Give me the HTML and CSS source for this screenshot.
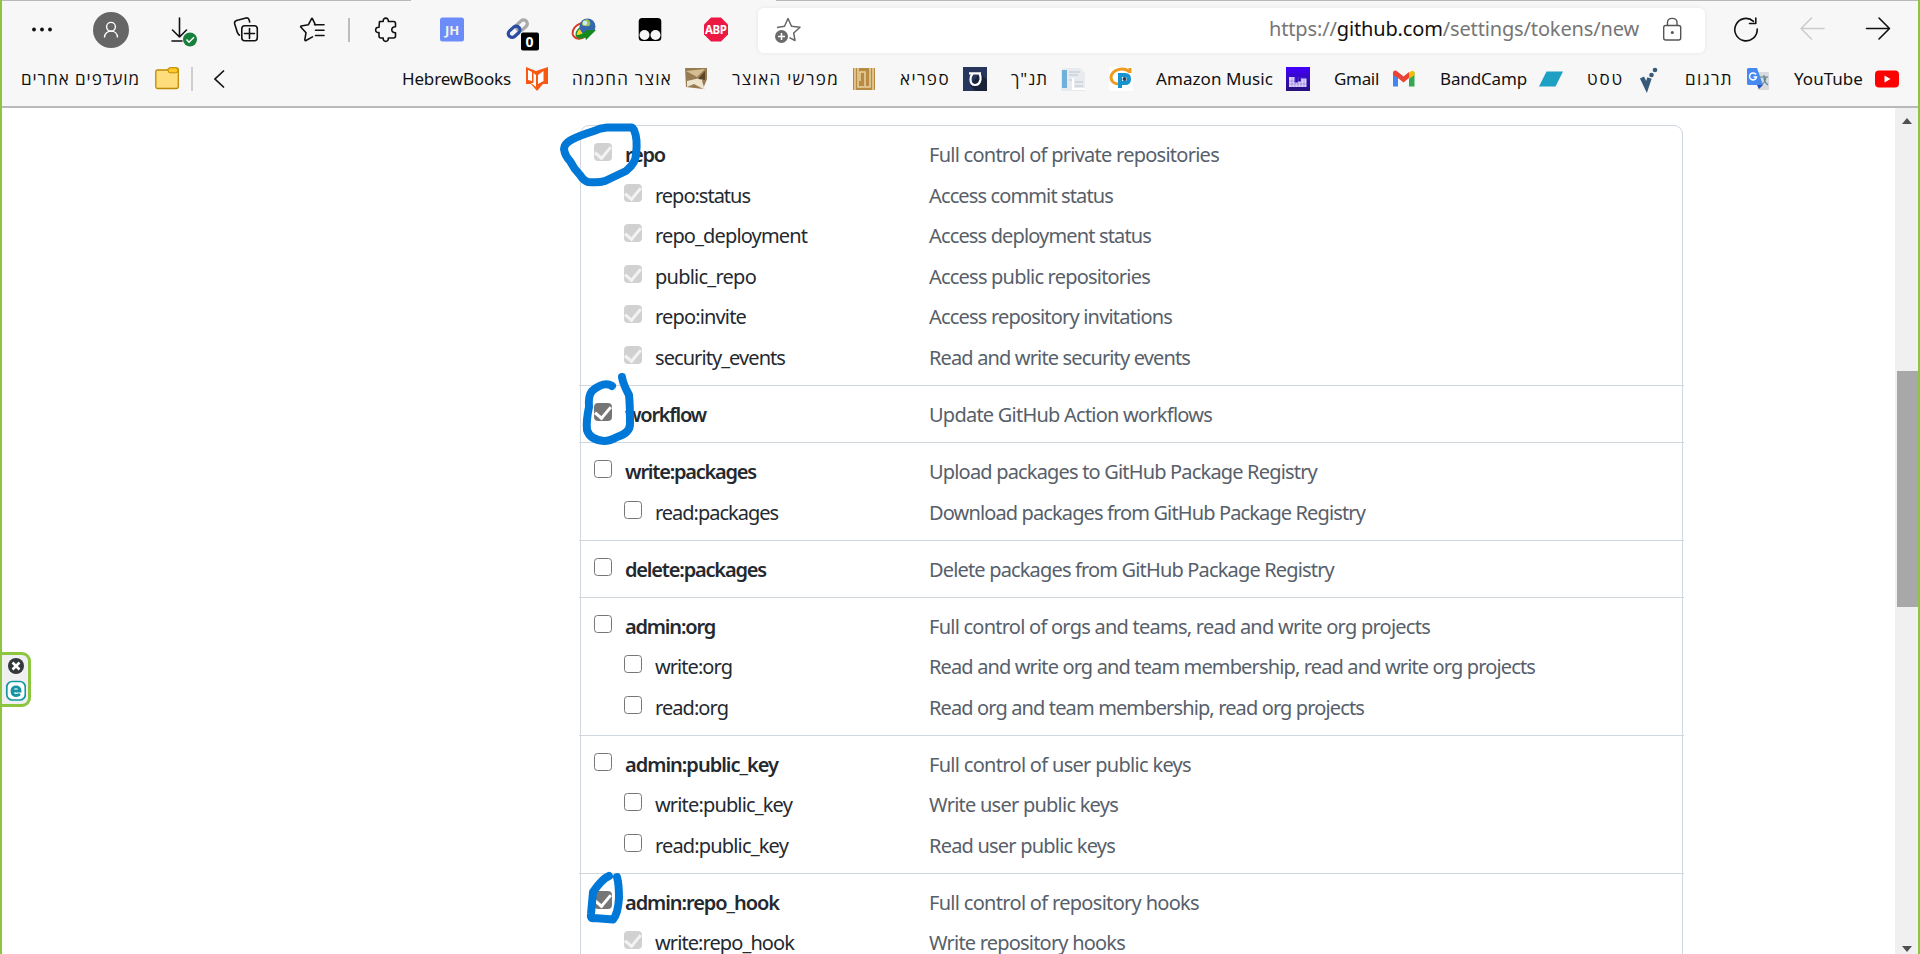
FILE: index.html
```html
<!DOCTYPE html>
<html lang="en">
<head>
<meta charset="utf-8">
<title>New personal access token</title>
<link rel="stylesheet" href="styles.css">
</head>
<body>
<div class="window">
<header class="chrome">
  <div class="tab-gap"></div>
  <div class="toolbar">
    <svg class="ico" viewBox="-18 -18 36 36"><g fill="#111"><circle cx="-8" cy="-.5" r="1.9"/><circle cx="0" cy="-.5" r="1.9"/><circle cx="8" cy="-.5" r="1.9"/></g></svg>
    <svg class="ico" viewBox="-18 -18 36 36"><circle r="18" fill="#666"/><g fill="none" stroke="#fff" stroke-width="1.4"><circle cy="-3.2" r="4.4"/><path d="M-6.5 7.5C-6.5-1 6.5-1 6.5 7.5"/></g></svg>
    <svg class="ico" viewBox="-18 -18 36 36"><path class="ln" d="M-.5-12V7M-7.5 0L-.5 7L6.5 0M-8 11H2"/><circle cx="10" cy="9.5" r="7" fill="#17803d"/><path d="M6.500 9.500l2.500 2.700l5-5" fill="none" stroke="#fff" stroke-width="1.6"/></svg>
    <svg class="ico" viewBox="-18 -18 36 36"><rect class="ln" x="-4.200" y="-4.200" width="15.500" height="15" rx="3"/><path class="ln" d="M3.500-1.500V8.500M-1.500 3.500H8.500M-6.500 5.200C-8.500 4-9 2-9.700-1L-11.300-6Q-12-8.700-9.500-9.500L0-12Q2.500-12.500 3.200-10L3.700-8"/></svg>
    <svg class="ico" viewBox="-18 -18 36 36"><path class="ln" d="M3.500-5L.5-11.200Q0-12-.5-11.200L-3.700-5.200L-10.800-4Q-11.800-3.500-11-2.800L-6 2.700L-7.200 9.800Q-7.100 10.900-6 10.500L.5 6.900M2.500-5.200H12M3.500.2H12M3.500 5.500H12"/></svg>
    <svg class="ico" viewBox="-18 -18 36 36"><path d="M0-12V12" stroke="#bdbdbd" stroke-width="2"/></svg>
    <svg class="ico" viewBox="-18 -18 36 36"><path class="ln" d="M-7.500-8.500H-3.800C-4.500-13 2-13 1.300-8.500H6.500Q8.500-8.500 8.500-6.500V-3.200C3.500-3.500 3.500 3 8.500 2.700V6Q8.500 8 6.500 8H1.300C2 12.500-4.500 12.500-3.800 8H-6Q-8 8-8 6V2.500C-12.500 3.500-12.500-3.500-8-2.700Z"/></svg>
    <svg class="ico" viewBox="-18 -18 36 36"><rect x="-12" y="-12.500" width="24" height="24" rx="2.500" fill="#6c8df9"/><text class="jh" x="0" y="4.500" text-anchor="middle">JH</text></svg>
    <svg class="ico wide" viewBox="-18 -18 40 40"><g fill="none" stroke-width="3.300"><rect x="-2" y="-11.500" width="7.500" height="12" rx="3.700" stroke="#aaa" transform="rotate(48 1 -5)"/><rect x="-9.500" y="-4" width="7.500" height="13" rx="3.700" stroke="#2b4da1" transform="rotate(48 -5 2)"/></g><rect x="1" y="2.500" width="18" height="18" rx="2" fill="#000"/><text class="count" x="9.500" y="17" text-anchor="middle">0</text></svg>
    <svg class="ico" viewBox="-18 -18 36 36"><ellipse cx="-3" cy="1" rx="9" ry="7" transform="rotate(-35 -3 1)" fill="#fff" stroke="#d63b24" stroke-width="2"/><ellipse cx="-2" cy="1" rx="7.500" ry="5" transform="rotate(-35)" fill="#f6d52a" stroke="#2e8f2f" stroke-width="1.500"/><circle cx="3.500" cy="-3.500" r="8" fill="#3566ae"/><path d="M-1-9Q4-13 6-8T1-4Q-4-4-1-9" fill="#9ac45a"/><circle cx="1" cy="-7" r="2.300" fill="#d5e8f5"/><path d="M-9 5Q-3 6 3 0H12L2 10L1 7Q-5 10-9 5" fill="#128a1e"/></svg>
    <svg class="ico" viewBox="-18 -18 36 36"><rect x="-11.300" y="-12" width="22.600" height="23" rx="3.500" fill="#000"/><circle cx="-5.500" cy="5" r="5" fill="#f7f7f7"/><circle cx="5.500" cy="5" r="5" fill="#f7f7f7"/></svg>
    <svg class="ico" viewBox="-18 -18 36 36"><path d="M-5-12.500H5L12-5.500V4.500L5 11.500H-5L-12 4.500V-5.500Z" fill="#ec1843"/><text class="abp" x="0" y="3.700" text-anchor="middle" textLength="22">ABP</text></svg>
    <div class="address">
      <svg class="ico star" viewBox="-18 -18 36 36"><path d="M-11-2.500L-3.500-3.800L0-11.500L3.500-3.800L12-2.700L5.700 3L7 10.500L1.500 7.700" fill="none" stroke="#666" stroke-width="1.500" stroke-linejoin="round"/><circle cx="-6.500" cy="6.500" r="6.500" fill="#6b6b6b"/><path d="M-6.500 3V10M-10 6.500H-3" stroke="#fff" stroke-width="1.500"/></svg>
      <span class="url" data-w="371">https://<b>github.com</b>/settings/tokens/new</span>
      <svg class="ico lock" viewBox="-18 -18 36 36"><g fill="none" stroke="#555" stroke-width="1.400"><rect x="-8.300" y="-4.500" width="17" height="14.500" rx="2"/><path d="M-4.500-4.500V-7.500C-4.500-13 5-13 5-7.500V-4.500"/></g><circle cx=".3" cy="2.500" r="1.500" fill="#555"/></svg>
    </div>
    <svg class="ico" viewBox="-18 -18 36 36"><path class="ln" d="M7.500-8.700A11.200 11.200 0 1 0 11.200-1M9.800-12V-6.500H3.500"/></svg>
    <svg class="ico" viewBox="-18 -18 36 36"><path class="ln pale" d="M12-1.500H-11M-.5-12L-11-1.500L-.5 9"/></svg>
    <svg class="ico" viewBox="-18 -18 36 36"><path class="ln" d="M-11.500-1.500H11.500M1-12L11.500-1.500L1 9"/></svg>
  </div>
  <div class="bookmarks">
    <span data-w="120">מועדפים אחרים</span>
    <svg class="fav" viewBox="0 0 24 24"><path d="M.8 4.500Q.8 3 2.500 3H12L15 1H21.500Q23.300 1 23.300 3V19.500Q23.300 21.500 21.300 21.500H2.800Q.8 21.500.8 19.500Z" fill="#ffdd7d" stroke="#be8a00" stroke-width="1.300"/><rect x="13" y=".8" width="10" height="5" rx="2.500" fill="#ffc928" stroke="#be8a00"/></svg>
    <i class="rule"></i>
    <svg class="fav" viewBox="0 0 24 24"><path d="M15 3.500L6 12L15 20.500" fill="none" stroke="#111" stroke-width="1.700"/></svg>
    <span data-w="110">HebrewBooks</span>
    <svg class="fav" viewBox="0 0 24 24"><path d="M1 0L11 4L23 0V17H18L12 24L6 17H1Z" fill="#f85912"/><path d="M3 3L7 5V14L3 13ZM8.500 6L11 8V20L6 16H8.500ZM13 8L18.500 4V14L13 17Z" fill="#fff"/></svg>
    <span data-w="101">אוצר החכמה</span>
    <svg class="fav" viewBox="0 0 24 24"><path d="M1 1H23V12L19 22L2 20Z" fill="#977b52"/><path d="M2 4L21 2L13 10Z" fill="#d5bd91"/><path d="M3 14L20 10L18 14L21 23L10 17L3 20Z" fill="#eee3cb"/><path d="M14 12L21 4V13Z" fill="#5d4528"/></svg>
    <span data-w="108">מפרשי האוצר</span>
    <svg class="fav" viewBox="0 0 24 24"><rect x="1" y="1" width="22" height="22" fill="#b88b45"/><path d="M3 1V23M21 1V23M6 1V20H12M18 1V20H13V5H8V14" fill="none" stroke="#ead39f" stroke-width="1.500"/></svg>
    <span data-w="51">ספריא</span>
    <svg class="fav" viewBox="0 0 24 24"><path d="M0 0H24V24H0Z" fill="#26365c"/><path d="M17 6L24 13V24H12L7 18Z" fill="#182238"/><path d="M6 6.300H18M16.500 7Q18 9 17.500 12.500Q16.500 18 12 18Q7.500 18 7.500 12.500Q7.500 9 9.500 7" fill="none" stroke="#fff" stroke-width="2.200"/></svg>
    <span data-w="38">תנ"ך</span>
    <svg class="fav" viewBox="0 0 24 24"><path d="M3 1H19L24 6V24H0V3Z" fill="#e7ebef"/><path d="M1 3H6V21H1Z" fill="#6eb2dc"/><path d="M8 5H19M8 8H17M8 13H13M14 15H22M14 19H22" stroke="#bbc4ce"/><path d="M12 11V22H24" fill="none" stroke="#fff" stroke-width="2"/></svg>
    <svg class="fav gp" viewBox="0 0 24 24"><rect width="24" height="24" fill="#fff"/><path d="M21 5C14-1 3 3 2 10C2 15 6 17 10 17M21 6V1" fill="none" stroke="#ef9b22" stroke-width="3"/><path d="M11 21V8H16Q20 8 20 12T16 16H11" fill="none" stroke="#1794cf" stroke-width="4"/><circle cx="15.500" cy="12" r="2" fill="#24435b"/></svg>
    <span data-w="118">Amazon Music</span>
    <svg class="fav" viewBox="0 0 24 24"><defs><linearGradient id="am" x2="0" y2="1"><stop stop-color="#4200ff"/><stop offset="1" stop-color="#26127a"/></linearGradient></defs><rect width="24" height="24" fill="url(#am)"/><path d="M3 10H8.500V15.500H12V14.500H15V11.500H20.500V20H3Z" fill="#dcd3fa"/><path d="M3 14H9M3 17H21M6 10V20M9 10V20M12 10V20M15 10V20M18 10V20" stroke="#7d67d1" stroke-width=".5"/></svg>
    <span data-w="46">Gmail</span>
    <svg class="fav" viewBox="0 0 24 24"><path d="M1 5V19.500H6V10Z" fill="#4285f4"/><path d="M17 10V19.500H22.500V5Z" fill="#34a853"/><path d="M17 6V12L22.500 8V5.500Q21 2 17 6" fill="#fbbc04"/><path d="M1 5.500Q2 2 6 5L11.500 9.500L17 5V11L11.500 15.500L6 11L1 8Z" fill="#ea4335"/></svg>
    <span data-w="88">BandCamp</span>
    <svg class="fav" viewBox="0 0 24 24"><path d="M8.500 4.500H25L17.500 19.500H1Z" fill="#1da0c3"/></svg>
    <span data-w="38">טסט</span>
    <svg class="fav" viewBox="0 0 24 24"><path d="M5 10.500L9.500 20L12.500 11" fill="none" stroke="#365a79" stroke-width="4.500"/><circle cx="14.500" cy="8" r="2.300" fill="#365a79"/><circle cx="18" cy="3" r="2.300" fill="#365a79"/></svg>
    <span data-w="49">תרגום</span>
    <svg class="fav" viewBox="0 0 24 24"><path d="M10 5H22Q23 5 23 7V22Q23 23 21 23H12Z" fill="#d8dadd"/><path d="M2 1H11L17 18H2Q1 18 1 16V2Z" fill="#4789ef"/><path d="M11 18H17L13 22Z" fill="#2a50ba"/><path d="M10 7.500A3.500 3.500 0 1 0 10.500 10H7.500" fill="none" stroke="#fff" stroke-width="1.500"/><path d="M14 10H22M18 8V10Q18 15 22 18M20 10Q19 16 15 18" fill="none" stroke="#59838e" stroke-width="1.200"/></svg>
    <span data-w="70">YouTube</span>
    <svg class="fav" viewBox="0 0 24 24"><rect y="3.500" width="24" height="17" rx="4" fill="#f00"/><path d="M9.500 8.500V15.500L15.500 12Z" fill="#fff"/></svg>
  </div>
</header>
<main class="viewport">
  <div class="page">
    <div class="scopes">
      <section>
        <div class="row"><i class="cb on off"></i><label data-w="41">repo</label><span data-w="291">Full control of private repositories</span></div>
        <div class="row sub"><i class="cb on off"></i><label data-w="96">repo:status</label><span data-w="185">Access commit status</span></div>
        <div class="row sub"><i class="cb on off"></i><label data-w="153">repo_deployment</label><span data-w="223">Access deployment status</span></div>
        <div class="row sub"><i class="cb on off"></i><label data-w="102">public_repo</label><span data-w="222">Access public repositories</span></div>
        <div class="row sub"><i class="cb on off"></i><label data-w="92">repo:invite</label><span data-w="244">Access repository invitations</span></div>
        <div class="row sub"><i class="cb on off"></i><label data-w="131">security_events</label><span data-w="262">Read and write security events</span></div>
      </section>
      <section>
        <div class="row"><i class="cb on"></i><label data-w="82">workflow</label><span data-w="284">Update GitHub Action workflows</span></div>
      </section>
      <section>
        <div class="row"><i class="cb"></i><label data-w="132">write:packages</label><span data-w="389">Upload packages to GitHub Package Registry</span></div>
        <div class="row sub"><i class="cb"></i><label data-w="124">read:packages</label><span data-w="437">Download packages from GitHub Package Registry</span></div>
      </section>
      <section>
        <div class="row"><i class="cb"></i><label data-w="142">delete:packages</label><span data-w="406">Delete packages from GitHub Package Registry</span></div>
      </section>
      <section>
        <div class="row"><i class="cb"></i><label data-w="91">admin:org</label><span data-w="502">Full control of orgs and teams, read and write org projects</span></div>
        <div class="row sub"><i class="cb"></i><label data-w="78">write:org</label><span data-w="607">Read and write org and team membership, read and write org projects</span></div>
        <div class="row sub"><i class="cb"></i><label data-w="74">read:org</label><span data-w="436">Read org and team membership, read org projects</span></div>
      </section>
      <section>
        <div class="row"><i class="cb"></i><label data-w="154">admin:public_key</label><span data-w="263">Full control of user public keys</span></div>
        <div class="row sub"><i class="cb"></i><label data-w="138">write:public_key</label><span data-w="190">Write user public keys</span></div>
        <div class="row sub"><i class="cb"></i><label data-w="134">read:public_key</label><span data-w="187">Read user public keys</span></div>
      </section>
      <section>
        <div class="row"><i class="cb on"></i><label data-w="155">admin:repo_hook</label><span data-w="271">Full control of repository hooks</span></div>
        <div class="row sub"><i class="cb on off"></i><label data-w="140">write:repo_hook</label><span data-w="197">Write repository hooks</span></div>
      </section>
    </div>
  </div>
  <div class="scrollbar"><i class="up"></i><i class="thumb"></i><i class="down"></i></div>
</main>
</div>
<aside class="side-widget">
  <svg viewBox="0 0 24 48"><circle cx="14" cy="11" r="8" fill="#32373c"/><path d="M10.500 7.500L17.500 14.500M17.500 7.500L10.500 14.500" stroke="#fff" stroke-width="2.600"/><rect x="4.800" y="26.500" width="18.500" height="18.500" rx="5.500" fill="#fff" stroke="#1594a5" stroke-width="1.700"/><path d="M10 36H18C18 30.500 10 30.500 10 36C10 41 15 41.500 18 39" fill="none" stroke="#1594a5" stroke-width="2.900"/></svg>
</aside>
<svg class="ink" viewBox="0 0 1920 954">
  <path d="M632 127.500H607Q600 128 594 131Q578 136 571 140Q564 144 564 149Q565 156 570 161Q574 169 580 175Q584 181 588 182Q599 183 605 181L626 171Q636 163 636 154Q638 139 634 130Z"/>
  <path d="M612 386Q604 381 592 391Q588 396 589 407Q586 421 587 430Q590 440 604 441Q610 441 617 437Q630 433 630 424Q630 404 629 395Q623 384 622 377"/>
  <path d="M609 876Q602 879 593 892L591 914Q590 919 594 918L613 919.500Q618 914 619 898Q619 884 617 877"/>
</svg>
<script src="fit.js"></script>
</body>
</html>
```
FILE: styles.css
```css
* { box-sizing: border-box; }
body { margin: 0; background: #fff; overflow: hidden; font-family: "Noto Sans", "Open Sans", "DejaVu Sans", sans-serif; }
.window { height: 954px; border: solid #8cc63f; border-width: 0 2px; display: flex; flex-direction: column; }
.chrome { position: relative; flex: none; height: 108px; background: #f7f7f7; border-top: 1px solid #b9b9b9; border-bottom: 2px solid #b9b9b9; }
.tab-gap { position: absolute; left: 409px; top: -1px; width: 365px; height: 1px; background: #f7f7f7; }
.toolbar { display: grid; grid-template-columns: 69px 69px 66px 66px 37px 38px 65px 68px 64px 66px 66px 60px 970px 66px 66px 36px; height: 58px; align-items: center; padding-left: 22px; }
.ico { width: 36px; height: 36px; display: block; flex: none; overflow: visible; }
.ico.wide { width: 40px; height: 40px; margin-top: 4px; }
.ln { fill: none; stroke: #111; stroke-width: 1.6; stroke-linejoin: round; stroke-linecap: round; }
.pale { stroke: #ccc; }
.jh { font: bold 13px "Noto Sans", sans-serif; fill: #f4f3e5; }
.count { font: bold 14px "Noto Sans", sans-serif; fill: #fff; }
.abp { font: bold 11.500px "Noto Sans", sans-serif; fill: #fff; }
.address { width: 947px; height: 45px; background: #fff; border-radius: 6px; box-shadow: 0 0 5px rgba(0,0,0,.07); display: flex; align-items: center; padding: 0 15px 0 12px; }
.url { margin-left: auto; margin-right: 15px; font-size: 20px; line-height: 28px; padding-bottom: 2px; color: #767676; white-space: nowrap; }
.url b { font-weight: 400; color: #111; }
.bookmarks { display: grid; height: 39px; align-items: center; padding-left: 19px; grid-template-columns: 134px 36px 18px 193px 123px 47px 112px 48px 120px 48px 63px 48px 50px 48px 47px 130px 48px 58px 48px 98px 49px 50px 48px 61px 48px 81px 24px; }
.bookmarks span { font-size: 17px; line-height: 24px; color: #111; white-space: nowrap; justify-self: start; }
.fav { width: 24px; height: 24px; display: block; overflow: visible; }
.rule { width: 2px; height: 24px; background: #cfcfcf; }
.viewport { flex: 1; min-height: 0; display: flex; }
.page { flex: 1; overflow: hidden; padding: 17px 0 0 578px; }
.scopes { width: 1103px; height: 900px; border: 1px solid #d0d7de; border-radius: 9px 9px 0 0; }
section { margin: 0 -2px; padding: 9px 2px 6.500px; border-top: 1px solid #d0d7de; }
section:first-child { border-top: 0; padding-bottom: 7px; }
.row { height: 40.500px; display: grid; grid-template-columns: 31px 304px 1fr; align-items: center; padding-left: 13px; font-size: 20px; line-height: 30px; white-space: nowrap; }
.row.sub { grid-template-columns: 31px 274px 1fr; padding-left: 43px; }
.row label { justify-self: start; color: #24292f; font-weight: 600; }
.row.sub label { font-weight: 400; }
.row span { justify-self: start; color: #57606a; }
.cb { width: 18px; height: 18px; border: 1.500px solid #767676; border-radius: 3.500px; background: #fff; margin-bottom: 6px; display: grid; place-items: center; }
.cb.on { background: #767676; }
.cb.on::after { content: ""; width: 7px; height: 13px; border: solid #fff; border-width: 0 3px 3px 0; transform: translateY(-1px) rotate(40deg); }
.cb.off { background: #d1d1d1; border-color: #d1d1d1; }
.cb.off::after { border-color: #f3f3f3; }
.scrollbar { width: 23px; background: #f0f0f0; display: flex; flex-direction: column; align-items: center; padding-top: 10px; }
.up, .down { border: solid transparent; border-width: 0 5.500px 6px; border-bottom-color: #505050; }
.thumb { width: 21px; height: 236px; margin-top: 247px; align-self: flex-end; background: #a8a8a8; }
.down { border-width: 6px 5.500px 0; border-top-color: #505050; margin: auto 0 2px; }
.side-widget { position: absolute; left: 0; top: 652px; width: 31px; height: 55px; border: 3px solid #8cc63f; border-left-width: 2px; border-radius: 0 9px 9px 0; background: #f0f0f0; }
.side-widget svg { width: 24px; height: 48px; display: block; }
.ink { position: absolute; left: 0; top: 0; width: 1920px; height: 954px; pointer-events: none; }
.ink path { fill: none; stroke: #0078d7; stroke-width: 8; stroke-linecap: round; stroke-linejoin: round; }
```
FILE: fit.js
```js
document.querySelectorAll("[data-w]").forEach(function (el) {
  var natural = el.getBoundingClientRect().width;
  var count = el.textContent.length;
  el.style.letterSpacing = (Number(el.dataset.w) - 1 - natural) / count + "px";
});
```
